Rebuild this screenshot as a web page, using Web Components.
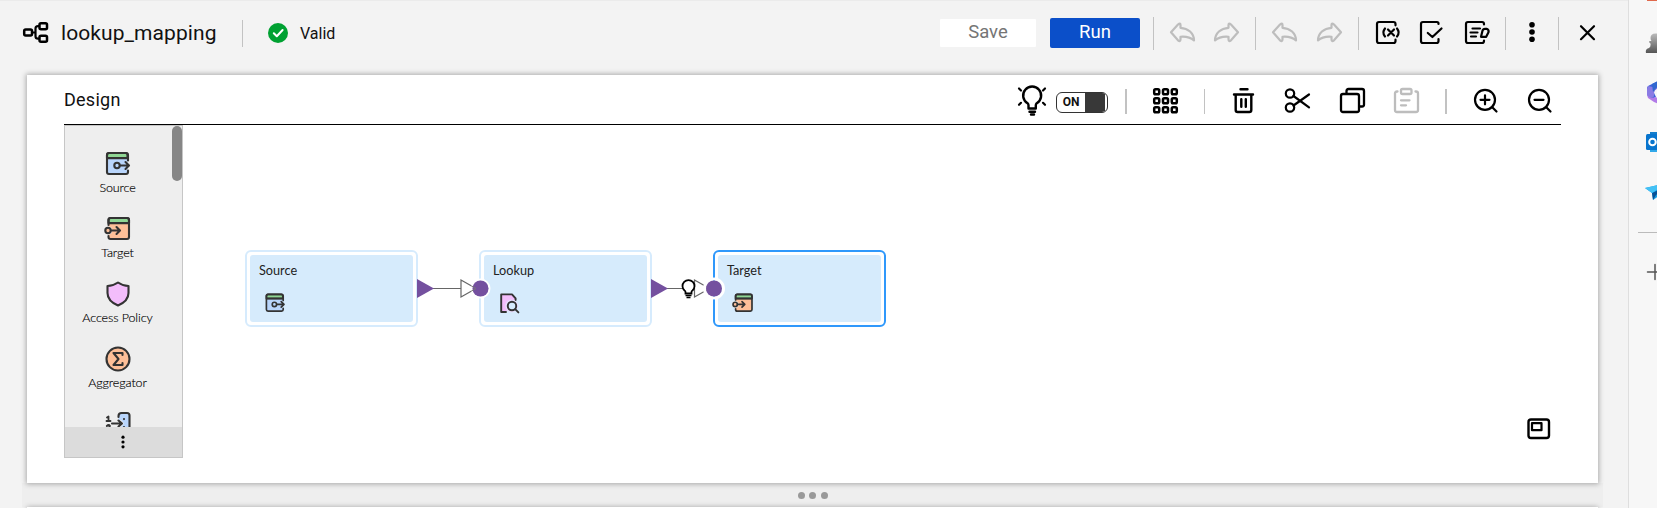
<!DOCTYPE html>
<html lang="en">
<head>
<meta charset="utf-8">
<title>lookup_mapping</title>
<style>
html,body{margin:0;height:508px;overflow:hidden;background:#f3f3f3;font-family:Roboto,"Liberation Sans",sans-serif;color:#111}
</style>
</head>
<body>
<mapping-app></mapping-app>
<script>
const def=(name,html,init)=>{
  const t=document.createElement('template');t.innerHTML=html;
  customElements.define(name,class extends HTMLElement{
    constructor(){super();this.attachShadow({mode:'open'}).append(t.content.cloneNode(true));}
    connectedCallback(){if(init)init.call(this,this.shadowRoot);}
  });
};
const SRC=`<rect x="3" y="3" width="20.5" height="21" rx="2" fill="#b9d5fb" stroke="none"/><path d="M3 8V5q0-2 2-2h16.500q2 0 2 2v3z" fill="#8fd694"/><path d="M24 10.500V5q0-2-2-2H5Q3 3 3 5v17q0 2 2 2h17q2 0 2-2v-1.500M3 8.200h21"/><circle cx="13" cy="15.500" r="2.700" fill="#b9d5fb"/><path d="M16 15.500h8.500M21.500 12l3.500 3.500-3.500 3.500"/>`;
const TGT=`<rect x="4.500" y="3" width="20.500" height="21" rx="2" fill="#fdbf98" stroke="none"/><path d="M4.500 8V5q0-2 2-2h16.500q2 0 2 2v3z" fill="#8fd694"/><path d="M4.500 10V5q0-2 2-2H23q2 0 2 2v17q0 2-2 2H6.500q-2 0-2-2v-1M4.500 8.200H25"/><circle cx="4" cy="15.500" r="4.300" fill="#eee" stroke="none"/><circle cx="4" cy="15.500" r="2.700" fill="#fdbf98"/><path d="M7 15.500h8.500M12.500 12l3.500 3.500-3.500 3.500"/>`;
const UNDO=`<path d="M3 13.300 10 5.500q2.500-2 2.500.5v2.800C20 9.300 26 14 26 21.500 22 18 18 17.300 12.500 17.800v2.500q0 3-2.500 1z"/>`;
const dark='stroke="#333" stroke-width="2.1"',k='stroke="#000" stroke-width="2.2"';
const ICONS={
 map:[28,28,k,`<rect x="2.200" y="10.500" width="7.800" height="6" rx="1.500" stroke-width="2.500"/><rect x="17.500" y="4.200" width="7.500" height="6" rx="1.500" stroke-width="2.500"/><rect x="17.500" y="16.700" width="7.500" height="6" rx="1.500" stroke-width="2.500"/><path d="M10.500 13.500h3M17 7.200h-1q-2.500 0-2.500 2.500v7.500q0 2.500 2.500 2.500h1"/>`],
 ok:[20,20,'stroke="#fff" stroke-width="2"',`<circle cx="10" cy="10" r="10" fill="#00a132" stroke="none"/><path d="m5.800 10.300 3 3 5.800-6.300"/>`],
 undo:[28,28,'stroke="#bdbdbd" stroke-width="2.2"',UNDO],
 redo:[28,28,'stroke="#bdbdbd" stroke-width="2.2"',`<g transform="matrix(-1 0 0 1 29 0)">${UNDO}</g>`],
 param:[28,28,k,`<path d="M21.500 6.300V5q0-2-2-2H5Q3 3 3 5v17q0 2 2 2h14.500q2 0 2-2v-1.300M11 9.500q-3.300 4 0 8M23 9.500q3.300 4 0 8M14 10.500l6 6M20 10.500l-6 6"/>`],
 validate:[28,28,k,`<path d="M20.500 5V4.500Q20.500 3 19 3H5Q3 3 3 5v17q0 2 2 2h13.500q2 0 2-2v-2M9.800 14l4.600 4 9.100-8.500"/>`],
 form:[28,28,k,`<path d="M21 5.500V5q0-2-2-2H5Q3 3 3 5v17q0 2 2 2h14q2 0 2-2v-.500M9.500 9.500h7.500M7.500 13.500h7M8 17.500h5M18 17.800l1.500-6q.5-2 2.500-2h1.500q2.700 1 2 3.500l-2.300 4.500z"/>`],
 more:[28,28,'',`<g fill="#000"><circle cx="14" cy="5.700" r="2.800"/><circle cx="14" cy="13" r="2.800"/><circle cx="14" cy="20.200" r="2.800"/></g>`],
 close:[28,28,k,`<path d="m8 7.200 13 13M21 7.200l-13 13" stroke-width="2.200"/>`],
 hint:[32,30,k,`<path d="M12.500 21.500v-3.300q0-1-1-2a9 9 0 1 1 9.300 0q-1 1-1 2v3.300zM13.500 24.700h5.500M15 27.500h3" stroke-width="2.400"/><path d="m3 1.500 2 2M29 1.500l-2 2M3 17.800l2-2M29 17.800l-2-2"/>`],
 grid:[28,28,'stroke="#000" stroke-width="2.500"',[2.8,11.8,20.8].map(y=>[3.2,12,20.8].map(x=>`<rect x="${x}" y="${y-.6}" width="5" height="5" rx="1.300"/>`).join('')).join('')],
 trash:[28,28,k,`<path d="M10.500 2.300h7M4 7.500h19M5.700 7.500V23q0 2 2 2h11.600q2 0 2-2V7.500M11.300 12.300v7.500M15.800 12.300v7.500" stroke-width="2.400"/>`],
 cut:[28,28,k,`<circle cx="7" cy="6.500" r="4.200"/><circle cx="7" cy="20.500" r="4.200"/><path d="M10.500 9 26 20.300M10.500 18.500 26 7.500"/>`],
 copy:[28,28,k,`<rect x="3" y="7" width="18" height="18" rx="2" stroke-width="2.300"/><path d="M8.500 6.500V4q0-2 2-2H24q2 0 2 2v13.500q0 2-2 2h-2.500" stroke-width="2.300"/>`],
 paste:[28,28,'stroke="#bdbdbd" stroke-width="2.300"',`<rect x="9" y="2" width="10.500" height="5" rx="1.500"/><path d="M5.500 4.500H5q-2 0-2 2V23q0 2 2 2h19q2 0 2-2V6.500q0-2-2-2h-.500M9 13.300h8.500M9 18.300h5"/>`],
 zin:[28,28,k,`<circle cx="13" cy="12.800" r="10"/><path d="m20.500 20.500 4 4M8.500 12.800h9M13 8.300v9"/>`],
 zout:[28,28,k,`<circle cx="13" cy="12.800" r="10"/><path d="m20.500 20.500 4 4M8.500 12.800h9"/>`],
 source:[28,28,dark,SRC],target:[28,28,dark,TGT],
 shield:[28,28,dark,`<path d="M14 2.500Q19 6 24.500 6v7q0 8-10.500 12.500Q3.500 21 3.500 13V6Q9 6 14 2.500z" fill="#f3bdfb"/>`],
 sigma:[28,28,dark,`<circle cx="14" cy="14" r="11.500" fill="#fdbf98"/><path d="M18.500 10V8H9.500l5 6-5 6h9v-2"/>`],
 seq:[28,28,dark,`<path d="M14.500 8V6q0-3 3-3H23q2.500 0 2.500 2.500V25h-11z" fill="#b9d5fb" stroke="none"/><path d="M13 10h4l3 3.500-3 3.500h-4z" fill="#eee" stroke="none"/><path d="M14.500 7V6q0-3 3-3H23q2.500 0 2.500 2.500V25"/><path d="M8 13.500h9.500M14.500 10.500l3.500 3-3.500 3"/><path d="M3 7.500 4.500 6.500v4.500M2.500 11h4M2.800 16q2-2 3.200 0l-2.500 3" stroke-width="1.800"/><path d="M20 9v.1M20 17v.1"/>`],
 lookup:[28,28,'stroke="#333" stroke-width="2.400"',`<path d="M21 10V7l-4-4H4v22h7V12z" fill="#f3bdfb" stroke="none"/><path d="M22 10V8l-4.500-5H4v22h6"/><circle cx="17" cy="17.500" r="8" fill="#e9dcfb" stroke="none"/><circle cx="17.500" cy="17.500" r="5.300" fill="#d6ebfc"/><path d="m21.500 21.500 4 4"/>`],
 mini:[24,22,k,`<rect x="1.500" y="1.500" width="20.500" height="18.500" rx="2.500" stroke-width="2.400"/><rect x="5" y="5.200" width="9.500" height="7"/>`],
 dots:[10,16,'',`<g fill="#000"><circle cx="5" cy="3.200" r="1.600"/><circle cx="5" cy="8" r="1.600"/><circle cx="5" cy="12.800" r="1.600"/></g>`],
 pawn:[22,22,'',`<defs><linearGradient id="p" x2="0" y2="1"><stop stop-color="#bbb"/><stop offset="1" stop-color="#555"/></linearGradient></defs><path d="M5.500 6q0-4.500 5-4.500t5 4.500q0 2-1.500 3h2q1 1.500-1 2.500 0 3 1.500 4.500 4 1 4 5H1q-1-4 3-5 2-1.500 1.500-4.500-2-1-1-2.500h2Q5.500 8 5.500 6z" fill="url(#p)"/>`],
 office:[22,24,'',`<path d="M12 1 2 6Q1 7 1 9v6l5 4 4-2-2-4q0-4 5-5l9-2V1z" fill="#3b62d8"/><path d="M1 15l5 3 4-1 3 3 9 1v3h-9l-5-2-6-4z" fill="#b27be8"/><path d="M2 6 1 9v6q2 3 5 3 3-1 2-6 1-3 5-4z" fill="#8a7be4"/><path d="m12 1-6 3 1 8 4-5 11-1V1z" fill="#3168cf"/>`],
 outlook:[22,22,'',`<path d="M5 1h17v20H5z" fill="#32a9ea"/><path d="M5 1h17v4H5z" fill="#147ecc"/><rect x="1" y="3" width="16" height="16" rx="1.500" fill="#0875ce"/><circle cx="7.500" cy="11" r="3.300" stroke="#fff" stroke-width="2"/>`],
 send:[22,16,'',`<path d="M0 3 22-2v14l-8-1-6 4-1-7z" fill="#159ce4"/><path d="m7 8 15-7-11 9-3 5z" fill="#075196"/><path d="M0 3 22-2 7 8z" fill="#43c1f5"/>`],
 plus:[16,16,'stroke="#555" stroke-width="1.500"',`<path d="M8 .5v15M.5 8h15"/>`]
};
def('ui-icon','<style>:host{display:block;flex:none;line-height:0}svg{display:block;overflow:visible}</style>',function(r){
  const [w,h,a,p]=ICONS[this.getAttribute('name')],s=+(this.getAttribute('scale')||1);
  const d=document.createElement('div');
  d.innerHTML=`<svg width="${w*s}" height="${h*s}" viewBox="0 0 ${w} ${h}" fill="none" stroke-linecap="round" stroke-linejoin="round" ${a}>${p}</svg>`;
  r.append(d.firstChild);
});
def('ui-divider','<style>:host{display:block;flex:none;width:var(--w,1px);height:var(--h,33px);background:#c2c2c2}</style>');
def('ui-button',`<style>:host{display:flex;flex:none;align-items:center;justify-content:center;box-sizing:border-box;width:96px;height:28px;background:#fff;color:#757575;font-size:18.500px;border-radius:1px;padding-bottom:2px}
:host([primary]){width:90px;height:30px;background:#0b4fc9;color:#fff;border-radius:2px}slot{display:block}</style><slot></slot>`);
def('ui-toggle',`<style>:host{display:flex;box-sizing:border-box;width:52px;height:21px;border:1px solid #333;border-radius:6px;overflow:hidden;background:#fff;font:700 12px/18px Roboto,sans-serif;flex:none}
span{width:28px;text-align:center}i{width:20px;height:19px;background:#383838}</style><span><slot></slot></span><i></i>`);
def('app-header',`<style>:host{display:flex;align-items:center;height:66px;padding:1px 27px 2px 22px;box-sizing:border-box;border-top:1px solid #ebebeb}
h1{margin:0 0 0 11px;width:181px;font:400 21px/28px Roboto,sans-serif;white-space:nowrap;letter-spacing:.08px}
.v{font-size:16px;margin-left:12px}.a{display:flex;align-items:center;margin-left:auto}.a>*{margin-left:var(--m,0)}</style>
<ui-icon name="map"></ui-icon><h1>lookup_mapping</h1><ui-divider style="--h:27px"></ui-divider><ui-icon name="ok" style="margin-left:25px"></ui-icon><span class="v">Valid</span>
<div class="a"><ui-button>Save</ui-button><ui-button primary style="--m:14px">Run</ui-button>
<ui-divider style="--m:13px"></ui-divider><ui-icon name="undo" style="--m:14px"></ui-icon><ui-icon name="redo" style="--m:16px"></ui-icon>
<ui-divider style="--m:15px"></ui-divider><ui-icon name="undo" style="--m:14px"></ui-icon><ui-icon name="redo" style="--m:17px"></ui-icon>
<ui-divider style="--m:15px"></ui-divider><ui-icon name="param" style="--m:15px"></ui-icon><ui-icon name="validate" style="--m:16px"></ui-icon><ui-icon name="form" style="--m:17px"></ui-icon>
<ui-divider style="--m:14px"></ui-divider><ui-icon name="more" style="--m:12px"></ui-icon><ui-divider style="--m:12px"></ui-divider><ui-icon name="close" style="--m:14px"></ui-icon></div>`);
def('design-toolbar',`<style>:host{display:flex;height:50px;box-sizing:border-box;border-bottom:1px solid #000;padding-right:7px}
h2{margin:13px auto 0 0;font:400 18px/24px Roboto,sans-serif;letter-spacing:.25px}.t{display:flex;padding-top:12px}.t>*{margin-left:var(--m,0)}ui-divider{margin-top:2px;--h:25px}ui-toggle{margin-top:5px}</style>
<h2>Design</h2><div class="t"><ui-icon name="hint"></ui-icon><ui-toggle style="--m:8px">ON</ui-toggle><ui-divider style="--m:17px;--w:2px"></ui-divider>
<ui-icon name="grid" style="--m:24px"></ui-icon><ui-divider style="--m:25px"></ui-divider><ui-icon name="trash" style="--m:25px"></ui-icon><ui-icon name="cut" style="--m:25px"></ui-icon><ui-icon name="copy" style="--m:27px"></ui-icon><ui-icon name="paste" style="--m:26px"></ui-icon>
<ui-divider style="--m:25px;--w:2px"></ui-divider><ui-icon name="zin" style="--m:25px"></ui-icon><ui-icon name="zout" style="--m:26px"></ui-icon></div>`);
def('palette-item',`<style>:host{display:flex;flex:none;flex-direction:column;align-items:center;height:65px;font:300 12.500px/16px Lato,sans-serif;letter-spacing:-.1px;-webkit-text-stroke:.15px #000;color:#000;white-space:nowrap}span{margin-top:2px}</style><span><slot></slot></span>`,function(r){
  const i=document.createElement('ui-icon');i.setAttribute('name',this.getAttribute('icon'));r.querySelector('span').before(i);
});
def('transform-palette',`<style>:host{display:flex;flex-direction:column;box-sizing:border-box;width:119px;height:333px;border:1px solid #c6c6c6;background:#eee}
.s{display:flex;flex:1;min-height:0;overflow:hidden}.l{flex:1;padding:24px 2px 0 0}.b{width:10px;height:55px;border-radius:5px;background:#868686}
.f{display:flex;justify-content:center;align-items:center;height:30px;background:#dcdcdc;padding-right:1px}</style>
<div class="s"><div class="l"><palette-item icon="source">Source</palette-item><palette-item icon="target">Target</palette-item><palette-item icon="shield">Access Policy</palette-item><palette-item icon="sigma">Aggregator</palette-item><palette-item icon="seq"></palette-item></div><div class="b"></div></div>
<div class="f"><ui-icon name="dots"></ui-icon></div>`);
def('flow-node',`<style>:host{position:absolute;display:block;box-sizing:border-box;width:173px;height:77px;border:2px solid #d6ebfd;border-radius:6px;background:#fff;padding:3px}
:host([selected]){border-color:#2f98fb}.n{height:67px;box-sizing:border-box;border-radius:3px;background:#d6ebfc;padding:6px 9px;font:400 12.700px/18px Lato,sans-serif;color:#222}</style><div class="n"><slot></slot><slot name="icon"></slot></div>`);
def('flow-canvas',`<style>:host{display:block;flex:1;position:relative}svg.w{position:absolute;inset:0;width:100%;height:100%}
flow-node ui-icon{margin:13px 0 0 5px}.m{position:absolute;right:10px;bottom:18px}</style>
<flow-node style="left:62px;top:125px">Source<ui-icon slot="icon" name="source" scale=".8"></ui-icon></flow-node>
<flow-node style="left:296px;top:125px">Lookup<ui-icon slot="icon" name="lookup" scale=".8"></ui-icon></flow-node>
<flow-node selected style="left:530px;top:125px">Target<ui-icon slot="icon" name="target" scale=".8"></ui-icon></flow-node>
<svg class="w" fill="none"><g stroke="#666" stroke-width="1.200"><path d="M250 163.500h28M278 155l15 8.500-15 8.500z"/><path d="M484 163.500h18M511.500 155l15 8.500-15 8.500z"/></g>
<g fill="#74509f"><path d="m234 154 17 9.500-17 9.500z"/><path d="m468 154 17 9.500-17 9.500z"/></g>
<circle cx="297.500" cy="163.500" r="9" stroke="#fff" stroke-width="2"/><circle cx="297.500" cy="163.500" r="8" fill="#74509f"/><circle cx="531" cy="163.500" r="9.500" stroke="#fff" stroke-width="3"/><circle cx="531" cy="163.500" r="8" fill="#74509f"/>
<path d="M288 160.700l5 2.800-5 2.800" stroke="#777"/>
<path d="M502.500 168.500v-1.500q0-1-1-1.500a6 6 0 1 1 8 0q-1 .5-1 1.500v1.500z" fill="#fff" stroke="#000" stroke-width="1.800"/><path d="M502.500 170.500h6M503.500 172.500h4" stroke="#000" stroke-width="1.500"/></svg>
<ui-icon class="m" name="mini"></ui-icon>`);
def('design-panel',`<style>:host{display:block;position:relative;z-index:1;box-sizing:border-box;height:408px;margin:9px 30px 0 27px;padding:0 37px;background:#fff;box-shadow:0 0 5px 1px rgba(0,0,0,.3)}.b{display:flex;height:333px}</style>
<design-toolbar></design-toolbar><div class="b"><transform-palette></transform-palette><flow-canvas></flow-canvas></div>`);
def('split-handle',`<style>:host{display:flex;height:24px;margin:0 25px 0 22px;justify-content:center;align-items:center;gap:4.500px;background:#eee}i{width:7px;height:7px;border-radius:50%;background:#999}</style><i></i><i></i><i></i>`);
def('next-panel',`<style>:host{display:block;height:20px;margin:0 30px 0 27px;background:#fff;box-shadow:0 0 5px rgba(0,0,0,.3)}</style>`);
def('side-bar',`<style>:host{display:flex;flex-direction:column;box-sizing:border-box;width:29px;height:508px;overflow:hidden;background:#f7f7f7;border-left:1px solid #dedede;padding-left:17px}
.o{width:20px;height:1px;background:#e0694c;flex:none;margin-left:1px}hr{border:0;height:1px;width:30px;background:#bbb;margin:31px 0 0 -8px;flex:none}</style>
<div class="o"></div><ui-icon name="pawn" style="margin:31px 0 0 -1px"></ui-icon><ui-icon name="office" style="margin-top:26px"></ui-icon><ui-icon name="outlook" style="margin:27px 0 0 -1px"></ui-icon><ui-icon name="send" style="margin:32px 0 0 -1px"></ui-icon><hr><ui-icon name="plus" style="margin:31px 0 0 1px"></ui-icon>`);
def('mapping-app',`<style>:host{display:flex;width:1657px;height:508px;overflow:hidden}main{width:1628px;overflow:hidden;background:#f3f3f3}</style>
<main><app-header></app-header><design-panel></design-panel><split-handle></split-handle><next-panel></next-panel></main><side-bar></side-bar>`);
</script>
</body>
</html>
